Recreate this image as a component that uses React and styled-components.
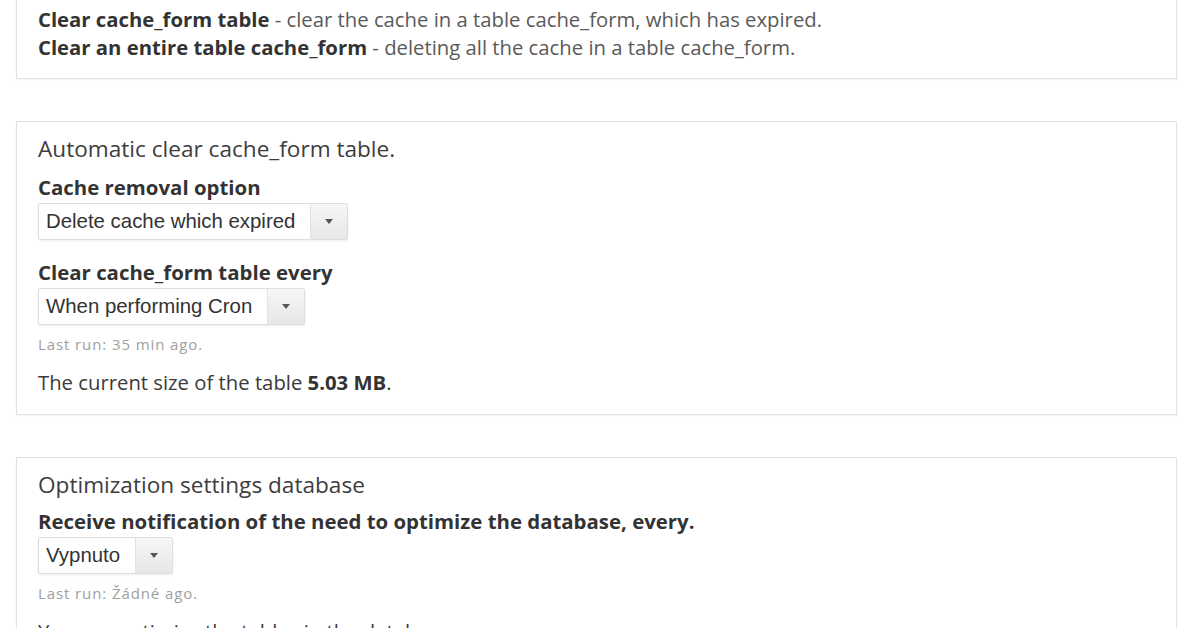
import React from "react";
import styled, { createGlobalStyle } from "styled-components";

const GlobalStyle = createGlobalStyle`
  html, body {
    margin: 0;
    padding: 0;
    background: #fff;
  }
  body {
    font-family: "Open Sans", "Noto Sans", sans-serif;
    color: #333;
  }
`;

const Page = styled.div`
  display: flex;
  flex-direction: column;
  gap: 42px;
  padding: 0 19px 0 16px;
  margin-top: -8px;
`;

const Panel = styled.fieldset`
  margin: 0;
  border: 1px solid #e3e3e3;
  box-shadow: 0 1px 2px rgba(0, 0, 0, 0.05);
  padding: 12px 21px ${(p) => p.$bottom || 18}px;
  display: flex;
  flex-direction: column;
  min-width: 0;
`;

const Line = styled.p`
  margin: 0;
  font-size: 20.3px;
  line-height: 28px;
  color: #5a5a5a;

  b {
    color: #333;
    font-weight: 700;
  }
`;

const Title = styled.div`
  font-size: 22.6px;
  line-height: 30px;
  color: #3d3d3d;
  margin-bottom: ${(p) => p.$gap || 10}px;
`;

const Label = styled.label`
  display: block;
  font-size: 20.4px;
  font-weight: 700;
  line-height: 26px;
  color: #333;
  margin-bottom: 3px;
`;

const Field = styled.div`
  display: flex;
  flex-direction: column;
  align-items: flex-start;
  margin-bottom: ${(p) => p.$gap || 19}px;
`;

const Select = styled.div`
  display: flex;
  align-items: stretch;
  height: 37px;
  box-sizing: border-box;
  border: 1px solid #dedede;
  border-radius: 2px;
  box-shadow: 0 1px 2px rgba(0, 0, 0, 0.08);
  background: #fff;
  font-family: "Liberation Sans", Arial, sans-serif;
  font-size: 20.4px;
  color: #333;
`;

const Value = styled.span`
  display: flex;
  align-items: center;
  padding: 0 15px 0 7px;
`;

const Arrow = styled.span`
  width: 36px;
  display: flex;
  align-items: center;
  justify-content: center;
  border-left: 1px solid #e2e2e2;
  background: linear-gradient(#f6f6f6, #e7e7e7);
`;

const Note = styled.div`
  font-size: 15px;
  letter-spacing: 0.9px;
  line-height: 20px;
  color: #a0a0a0;
  margin-top: 9px;
`;

const Size = styled.div`
  font-size: 20.3px;
  line-height: 28px;
  color: #3a3a3a;

  b {
    font-weight: 700;
    color: #333;
  }
`;

const Dropdown = ({ value }) => (
  <Select>
    <Value>{value}</Value>
    <Arrow>
      <svg width="8" height="5" viewBox="0 0 8 5">
        <path d="M0 0h8L4 5z" fill="#555" />
      </svg>
    </Arrow>
  </Select>
);

export default function App() {
  return (
    <>
      <GlobalStyle />
      <Page>
        <Panel $bottom={17}>
          <Line>
            <b>Clear cache_form table</b> - clear the cache in a table cache_form, which has expired.
          </Line>
          <Line>
            <b>Clear an entire table cache_form</b> - deleting all the cache in a table cache_form.
          </Line>
        </Panel>

        <Panel>
          <Title>Automatic clear cache_form table.</Title>
          <Field>
            <Label>Cache removal option</Label>
            <Dropdown value="Delete cache which expired" />
          </Field>
          <Field $gap={14}>
            <Label>Clear cache_form table every</Label>
            <Dropdown value="When performing Cron" />
            <Note>Last run: 35 min ago.</Note>
          </Field>
          <Size>
            The current size of the table <b>5.03 MB</b>.
          </Size>
        </Panel>

        <Panel>
          <Title $gap={8}>Optimization settings database</Title>
          <Field $gap={14}>
            <Label>Receive notification of the need to optimize the database, every.</Label>
            <Dropdown value="Vypnuto" />
            <Note>Last run: Žádné ago.</Note>
          </Field>
          <Size>You can optimize the tables in the database.</Size>
        </Panel>
      </Page>
    </>
  );
}
